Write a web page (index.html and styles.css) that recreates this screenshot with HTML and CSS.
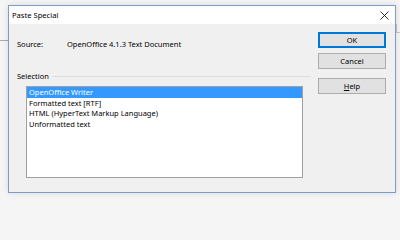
FILE: index.html
```html
<!DOCTYPE html>
<html>
<head>
<meta charset="utf-8">
<link rel="stylesheet" href="styles.css">
</head>
<body>
<div class="bg-line bg-line-left"></div>
<div class="bg-line bg-line-right"></div>
<div class="bg-vline"></div>
<div class="desk">
  <div class="window">
    <div class="titlebar">
      <span class="title">Paste Special</span>
      <svg class="close" width="9" height="9" viewBox="0 0 9 9"><path d="M0.5 0.5 L8.5 8.5 M8.5 0.5 L0.5 8.5" stroke="#1a1a1a" stroke-width="0.9" fill="none"/></svg>
    </div>
    <div class="content">
      <div class="main">
        <div class="source-row">
          <span class="source-label">Source:</span>
          <span class="source-value">OpenOffice 4.1.3 Text Document</span>
        </div>
        <div class="group-row">
          <span class="group-label">Selection</span>
          <span class="group-line"></span>
        </div>
        <div class="listbox">
          <div class="item selected">OpenOffice Writer</div>
          <div class="item">Formatted text [RTF]</div>
          <div class="item">HTML (HyperText Markup Language)</div>
          <div class="item">Unformatted text</div>
        </div>
      </div>
      <div class="buttons">
        <div class="btn btn-default">OK</div>
        <div class="btn btn-cancel">Cancel</div>
        <div class="btn btn-help"><u>H</u>elp</div>
      </div>
    </div>
  </div>
</div>
</body>
</html>
```
FILE: styles.css
```css
html, body {
  margin: 0;
  padding: 0;
}
body {
  width: 400px;
  height: 201px;
  overflow: hidden;
  position: relative;
  background: #f5f5f5;
  font-family: "Noto Sans", "Open Sans", sans-serif;
  font-size: 7.5px;
  color: #000;
}
.bg-line {
  position: absolute;
  height: 1px;
  background: #a9a9a9;
}
.bg-line-left {
  left: 0;
  top: 40px;
  width: 8px;
}
.bg-line-right {
  left: 396px;
  top: 32px;
  width: 4px;
  background: #c8c8c8;
}
.bg-vline {
  position: absolute;
  left: 396px;
  top: 24px;
  width: 1px;
  height: 9px;
  background: #c8c8c8;
}
.desk {
  position: relative;
  padding: 5px 0 0 8px;
}
.window {
  width: 386px;
  height: 186px;
  border: 1px solid #7c9dc8;
  background: #f0f0f0;
  box-shadow: 0 0 6px rgba(0, 0, 0, 0.12);
  display: flex;
  flex-direction: column;
}
.titlebar {
  height: 18px;
  background: #ffffff;
  display: flex;
  align-items: center;
  justify-content: space-between;
  padding: 0 6px 0 3px;
}
.title {
  font-size: 7.6px;
  line-height: 12px;
}
.close {
  display: block;
  margin-top: 1px;
}
.content {
  flex: 1;
  display: flex;
  padding: 8px 9px 0 8px;
  gap: 8px;
}
.main {
  flex: 1;
  padding-top: 6px;
  display: flex;
  flex-direction: column;
}
.source-row {
  display: flex;
  line-height: 12px;
  height: 12px;
}
.source-label {
  width: 50px;
}
.group-row {
  margin-top: 20px;
  display: flex;
  align-items: center;
  line-height: 12px;
  height: 12px;
}
.group-label {
  padding-right: 3px;
}
.group-line {
  flex: 1;
  height: 1px;
  background: #dcdcdc;
}
.listbox {
  margin: 4px 7px 0 9px;
  height: 90px;
  border: 1px solid #a0a0a0;
  background: #ffffff;
}
.item {
  height: 10.5px;
  line-height: 10.5px;
  padding-left: 2px;
  white-space: nowrap;
}
.item.selected {
  background: #3399ff;
  color: #ffffff;
}
.buttons {
  width: 68px;
  display: flex;
  flex-direction: column;
}
.btn {
  height: 16px;
  box-sizing: border-box;
  border: 1px solid #adadad;
  background: #e1e1e1;
  display: flex;
  align-items: center;
  justify-content: center;
  line-height: 12px;
}
.btn-default {
  border: 2px solid #0078d7;
}
.btn-cancel {
  margin-top: 5px;
}
.btn-help {
  margin-top: 9px;
}
.btn u {
  text-decoration: underline;
  text-underline-offset: 1px;
}
```
